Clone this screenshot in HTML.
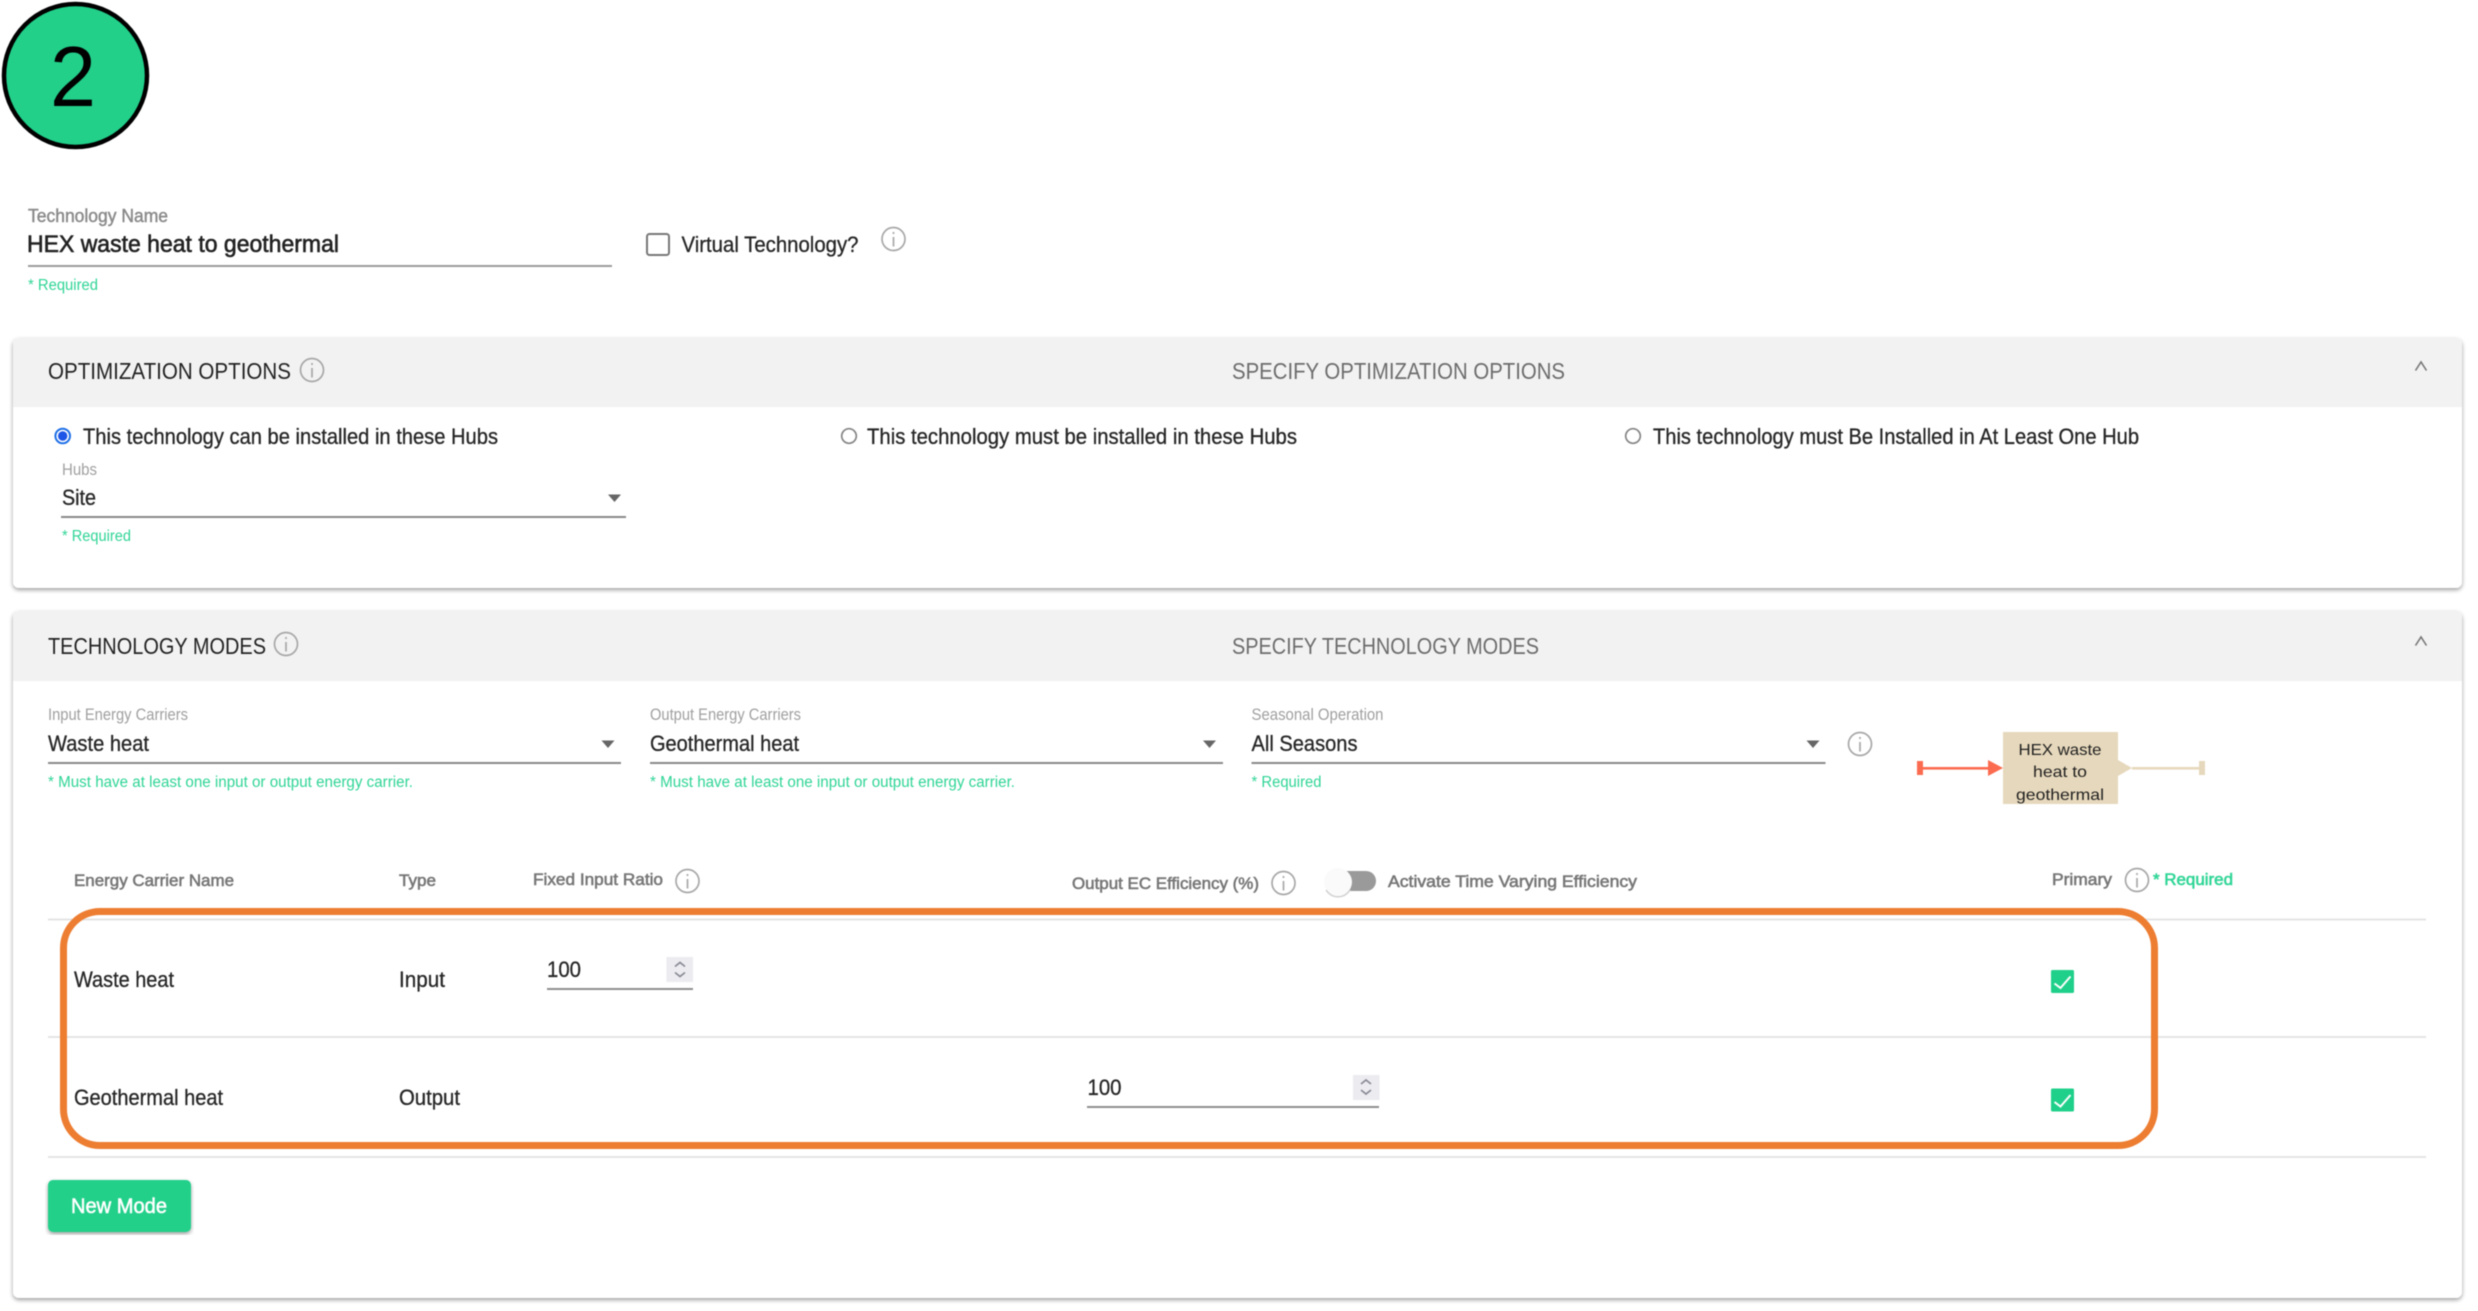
<!DOCTYPE html>
<html lang="en"><head><meta charset="utf-8"><title>Technology</title>
<style>
html,body{margin:0;padding:0;background:#fff;width:2478px;height:1311px;overflow:hidden}
svg{display:block;filter:blur(.5px)}
text{font-family:"Liberation Sans",Arial,sans-serif;fill:#222}
.m{stroke:#222;stroke-width:.6px}
.lab{fill:#a0a0a0;font-size:17px}
.req{fill:#2fd596;font-size:15.5px}
.hd{fill:#777;font-size:17px;stroke:#777;stroke-width:.6px}
.t20{font-size:22px;fill:#262626;stroke:#262626;stroke-width:.3px}
</style></head><body>
<svg xmlns="http://www.w3.org/2000/svg" width="2478" height="1311" viewBox="0 0 2478 1311">
<defs>
<filter id="sh" x="-2%" y="-5%" width="104%" height="110%"><feDropShadow dx="0" dy="2" stdDeviation="2" flood-color="#000" flood-opacity=".38"/></filter>
<g id="i" fill="none" stroke="#a8a8a8" stroke-width="1.7"><circle r="11.5"/><path d="M0-2V7.5"/><path d="M0-7V-5"/></g>
<path id="a" d="M-6.5-3.5H6.5L0 4z" fill="#666"/>
<path id="ch" d="M-5.5 4.5L0-4L5.5 4.5" fill="none" stroke="#777" stroke-width="1.6"/>
<g id="sp"><path d="M-5-3L0-7L5-3M-5 3L0 7L5 3" fill="none" stroke="#8a8a96" stroke-width="1.7"/></g>
<g id="ck"><rect x="-11.5" y="-11.5" width="23" height="23" rx="1.5" fill="#1fd08a"/><path d="M-8 2L-2 6.5L8-5" fill="none" stroke="#fff" stroke-width="2"/></g>
</defs>

<!-- badge -->
<circle cx="75.5" cy="75.5" r="71.5" fill="#22d08a" stroke="#000" stroke-width="4.5"/>
<text x="50" y="106" font-size="85" style="fill:#000" textLength="46" lengthAdjust="spacingAndGlyphs">2</text>

<!-- name -->
<text x="28" y="222" class="lab" style="font-size:18px;fill:#8a8a8a;stroke:#8a8a8a;stroke-width:.45px" textLength="140" lengthAdjust="spacingAndGlyphs">Technology Name</text>
<text x="27" y="252" class="m" font-size="24" textLength="312" lengthAdjust="spacingAndGlyphs">HEX waste heat to geothermal</text>
<rect x="28" y="265" width="584" height="2" fill="#9c9c9c"/>
<text x="28" y="290" class="req" textLength="70" lengthAdjust="spacingAndGlyphs">* Required</text>
<rect x="647" y="234" width="22" height="21" rx="2.5" fill="#fff" stroke="#777" stroke-width="2"/>
<text x="681.5" y="252" class="t20" textLength="177" lengthAdjust="spacingAndGlyphs">Virtual Technology?</text>
<use href="#i" x="893.5" y="239"/>

<!-- card 1 -->
<rect x="13" y="338" width="2449" height="250" rx="6" fill="#fff" filter="url(#sh)"/>
<path d="M13 407V344a6 6 0 0 1 6-6H2456a6 6 0 0 1 6 6V407z" fill="#f2f2f2"/>
<text x="48" y="379" font-size="23" textLength="243" lengthAdjust="spacingAndGlyphs">OPTIMIZATION OPTIONS</text>
<use href="#i" x="312" y="370"/>
<text x="1232" y="379" font-size="23" style="fill:#6c6c6c" textLength="333" lengthAdjust="spacingAndGlyphs">SPECIFY OPTIMIZATION OPTIONS</text>
<use href="#ch" x="2421" y="366"/>
<circle cx="62.7" cy="436" r="7.3" fill="#fff" stroke="#1d6fe6" stroke-width="2"/><circle cx="62.7" cy="436" r="4.7" fill="#1d55e6"/>
<text x="83" y="444" class="t20" textLength="415" lengthAdjust="spacingAndGlyphs">This technology can be installed in these Hubs</text>
<circle cx="849" cy="436" r="7.3" fill="#fff" stroke="#858585" stroke-width="1.7"/>
<text x="867" y="444" class="t20" textLength="430" lengthAdjust="spacingAndGlyphs">This technology must be installed in these Hubs</text>
<circle cx="1633" cy="436" r="7.3" fill="#fff" stroke="#858585" stroke-width="1.7"/>
<text x="1653" y="444" class="t20" textLength="486" lengthAdjust="spacingAndGlyphs">This technology must Be Installed in At Least One Hub</text>
<text x="62" y="475" class="lab" textLength="35" lengthAdjust="spacingAndGlyphs">Hubs</text>
<text x="62" y="505" class="t20" textLength="34" lengthAdjust="spacingAndGlyphs">Site</text>
<use href="#a" x="614.5" y="498"/>
<rect x="61" y="516" width="565" height="2" fill="#8a8a8a"/>
<text x="62" y="541" class="req" textLength="69" lengthAdjust="spacingAndGlyphs">* Required</text>

<!-- card 2 -->
<rect x="13" y="611" width="2449" height="687" rx="6" fill="#fff" filter="url(#sh)"/>
<path d="M13 681V617a6 6 0 0 1 6-6H2456a6 6 0 0 1 6 6V681z" fill="#f2f2f2"/>
<text x="48" y="654" font-size="23" textLength="218" lengthAdjust="spacingAndGlyphs">TECHNOLOGY MODES</text>
<use href="#i" x="286" y="644"/>
<text x="1232" y="654" font-size="23" style="fill:#6c6c6c" textLength="307" lengthAdjust="spacingAndGlyphs">SPECIFY TECHNOLOGY MODES</text>
<use href="#ch" x="2421" y="641"/>

<text x="48" y="720" class="lab" textLength="140" lengthAdjust="spacingAndGlyphs">Input Energy Carriers</text>
<text x="48" y="751" class="t20" textLength="101" lengthAdjust="spacingAndGlyphs">Waste heat</text>
<use href="#a" x="608" y="744"/>
<rect x="48" y="762" width="573" height="2" fill="#8a8a8a"/>
<text x="48" y="787" class="req" textLength="365" lengthAdjust="spacingAndGlyphs">* Must have at least one input or output energy carrier.</text>

<text x="650" y="720" class="lab" textLength="151" lengthAdjust="spacingAndGlyphs">Output Energy Carriers</text>
<text x="650" y="751" class="t20" textLength="149" lengthAdjust="spacingAndGlyphs">Geothermal heat</text>
<use href="#a" x="1209.5" y="744"/>
<rect x="650" y="762" width="573" height="2" fill="#8a8a8a"/>
<text x="650" y="787" class="req" textLength="365" lengthAdjust="spacingAndGlyphs">* Must have at least one input or output energy carrier.</text>

<text x="1251.5" y="720" class="lab" textLength="132" lengthAdjust="spacingAndGlyphs">Seasonal Operation</text>
<text x="1251.5" y="751" class="t20" textLength="106" lengthAdjust="spacingAndGlyphs">All Seasons</text>
<use href="#a" x="1813" y="744"/>
<rect x="1251.5" y="762" width="574" height="2" fill="#8a8a8a"/>
<text x="1251.5" y="787" class="req" textLength="70" lengthAdjust="spacingAndGlyphs">* Required</text>
<use href="#i" x="1860" y="744"/>

<!-- diagram -->
<rect x="2003" y="732" width="115" height="72" fill="#e6d8bc"/>
<rect x="1917" y="761" width="6" height="14" fill="#fb6b4f"/><rect x="1923" y="767" width="66" height="2.6" fill="#fb6b4f"/><path d="M1988 760L2003 768L1988 776z" fill="#fb6b4f"/>
<path d="M2118 760L2132 768L2118 776z" fill="#e6d8bc"/><rect x="2132" y="767" width="67" height="2.6" fill="#e6d8bc"/><rect x="2199" y="761" width="6" height="14" fill="#e6d8bc"/>
<text x="2060" y="755" font-size="16" text-anchor="middle" textLength="83" lengthAdjust="spacingAndGlyphs">HEX waste</text>
<text x="2060" y="777" font-size="16" text-anchor="middle" textLength="54" lengthAdjust="spacingAndGlyphs">heat to</text>
<text x="2060" y="800" font-size="16" text-anchor="middle" textLength="88" lengthAdjust="spacingAndGlyphs">geothermal</text>

<!-- table header -->
<text x="74" y="886" class="hd" textLength="160" lengthAdjust="spacingAndGlyphs">Energy Carrier Name</text>
<text x="399" y="886" class="hd" textLength="37" lengthAdjust="spacingAndGlyphs">Type</text>
<text x="533" y="885" class="hd" textLength="130" lengthAdjust="spacingAndGlyphs">Fixed Input Ratio</text>
<use href="#i" x="687.5" y="881"/>
<text x="1072" y="889" class="hd" textLength="187" lengthAdjust="spacingAndGlyphs">Output EC Efficiency (%)</text>
<use href="#i" x="1283.5" y="883"/>
<rect x="1328" y="871" width="48" height="20" rx="10" fill="#9a9a9a"/>
<circle cx="1338" cy="882" r="14" fill="#fafafa"/>
<path d="M1326 890a14 14 0 0 0 24 0" fill="none" stroke="#d0d0d0" stroke-width="1.5"/>
<text x="1388" y="887" class="hd" textLength="249" lengthAdjust="spacingAndGlyphs">Activate Time Varying Efficiency</text>
<text x="2052" y="885" class="hd" textLength="60" lengthAdjust="spacingAndGlyphs">Primary</text>
<use href="#i" x="2137" y="880"/>
<text x="2153" y="885" class="req" style="font-size:17px;stroke:#2fd596;stroke-width:.6px" textLength="80" lengthAdjust="spacingAndGlyphs">* Required</text>
<rect x="48" y="918.5" width="2378" height="2" fill="#e4e4e4"/>

<!-- rows -->
<text x="74" y="987" class="t20" textLength="100" lengthAdjust="spacingAndGlyphs">Waste heat</text>
<text x="399" y="987" class="t20" textLength="46" lengthAdjust="spacingAndGlyphs">Input</text>
<text x="547" y="977" class="t20" textLength="34" lengthAdjust="spacingAndGlyphs">100</text>
<rect x="666.5" y="957" width="26.5" height="25" fill="#ebebf0"/>
<use href="#sp" x="680" y="969.5"/>
<rect x="547" y="988" width="146" height="2" fill="#8f8f8f"/>
<use href="#ck" x="2062.5" y="981.5"/>
<rect x="48" y="1036" width="2378" height="2" fill="#e4e4e4"/>

<text x="74" y="1105" class="t20" textLength="149" lengthAdjust="spacingAndGlyphs">Geothermal heat</text>
<text x="399" y="1105" class="t20" textLength="61" lengthAdjust="spacingAndGlyphs">Output</text>
<text x="1087.5" y="1095" class="t20" textLength="34" lengthAdjust="spacingAndGlyphs">100</text>
<rect x="1353" y="1075" width="26.5" height="25" fill="#ebebf0"/>
<use href="#sp" x="1366" y="1087"/>
<rect x="1087" y="1106" width="292" height="2" fill="#8f8f8f"/>
<use href="#ck" x="2062.5" y="1100"/>
<rect x="48" y="1156" width="2378" height="2" fill="#e4e4e4"/>

<!-- highlight -->
<rect x="63.5" y="911.5" width="2091" height="234" rx="36.5" fill="none" stroke="#ed7d31" stroke-width="7"/>

<!-- button -->
<rect x="48" y="1180" width="143" height="52" rx="5" fill="#20d08a" filter="url(#sh)"/>
<text x="71" y="1213" class="t20" style="font-size:21px;fill:#fff;stroke:#fff;stroke-width:.55px" textLength="96" lengthAdjust="spacingAndGlyphs">New Mode</text>
</svg>
</body></html>
